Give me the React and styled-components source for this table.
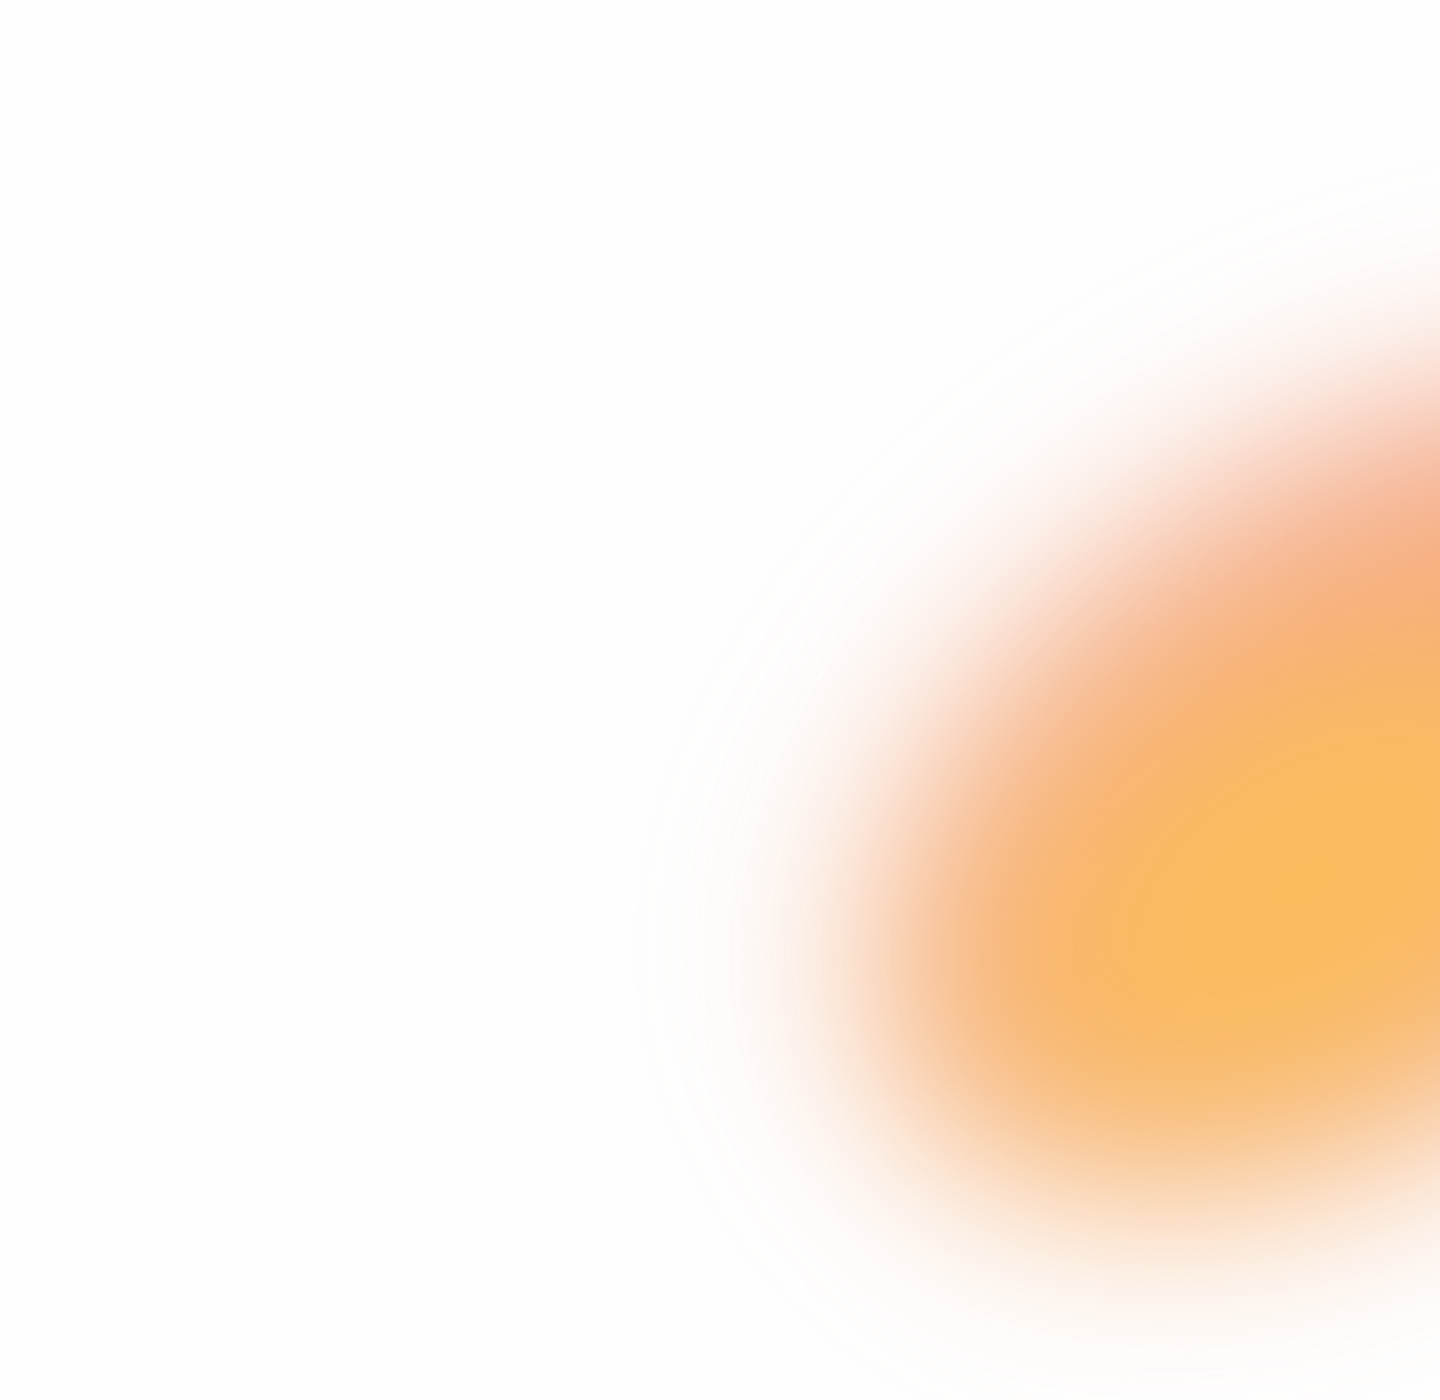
import React from 'react';
import styled, { createGlobalStyle } from 'styled-components';

const GlobalStyle = createGlobalStyle`
    html, body {
        margin: 0;
        padding: 0;
        background: #fefefe;
        font-family: "Inter", "Liberation Sans", sans-serif;
    }
`;

const Page = styled.div`
    position: relative;
    width: 100%;
    height: 1400px;
    overflow: hidden;
    background: #fefefe;
`;

// soft orange glow sitting on the backdrop
const Glow = styled.div`
    position: absolute;
    left: ${props => props.cx - props.w / 2}px;
    top: ${props => props.cy - props.h / 2}px;
    width: ${props => props.w}px;
    height: ${props => props.h}px;
    border-radius: 50%;
    transform: rotate(${props => props.angle}deg);
    background: ${props => props.fill};
    opacity: ${props => props.alpha || 1};
    filter: blur(${props => props.blur}px);
    pointer-events: none;
`;

const haloFill = '#f6c1a6';
const coreFill = 'radial-gradient(ellipse 58% 58% at 40% 56%, #fabe5a 0%, #fabd5c 30%, #f8b76a 48%, #f6ae7e 66%, #f4a98a 82%, #f4aa90 100%)';

const App = () => (
    <React.Fragment>
        <GlobalStyle />
        <Page>
            <Glow cx={1370} cy={800} w={1160} h={750} angle={-32} fill={haloFill} alpha={0.2} blur={110} />
            <Glow cx={1375} cy={790} w={1100} h={650} angle={-33} fill={coreFill} blur={90} />
        </Page>
    </React.Fragment>
);

export default App;
